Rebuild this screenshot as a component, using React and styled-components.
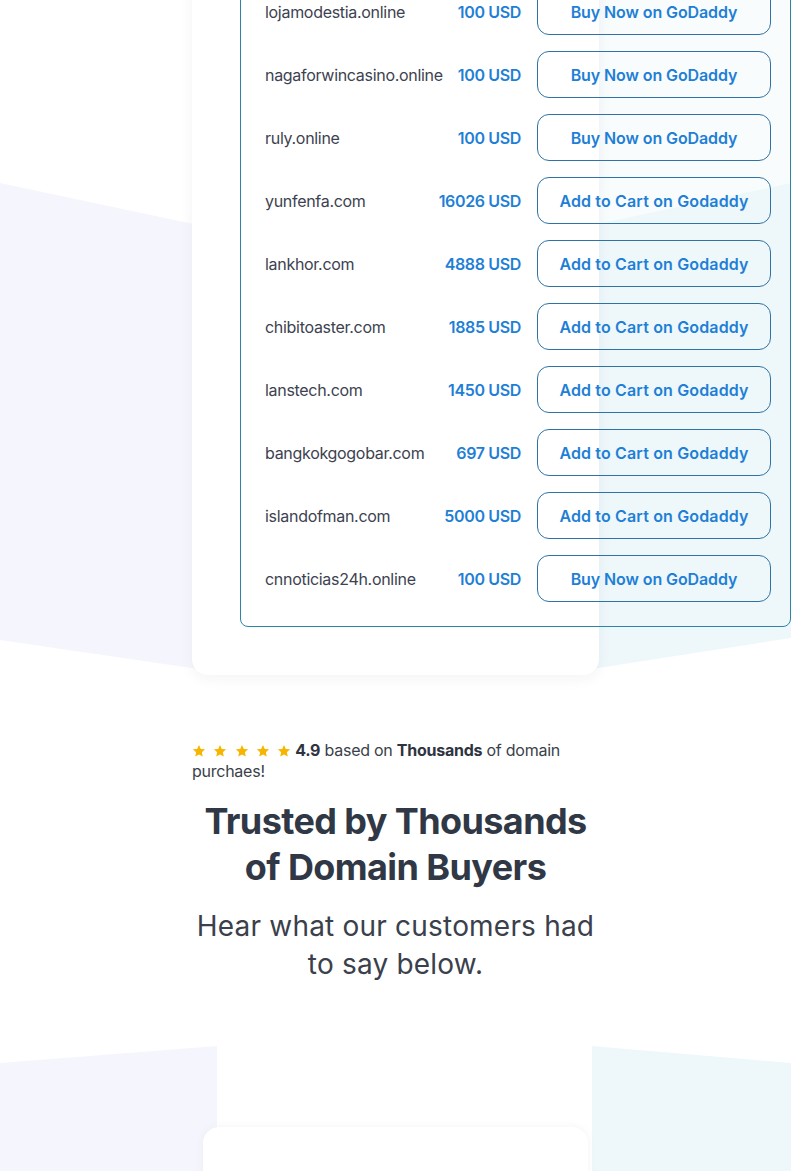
import React from 'react';
import styled, { createGlobalStyle } from 'styled-components';

const GlobalStyle = createGlobalStyle`
  html, body { margin: 0; padding: 0; background: #ffffff; overflow-x: hidden; }
  body { font-family: Inter, "Noto Sans", sans-serif; -webkit-font-smoothing: antialiased; }
  *, *::before, *::after { box-sizing: border-box; }
`;

const topBg = encodeURIComponent(
  `<svg xmlns="http://www.w3.org/2000/svg" width="791" height="800" viewBox="0 0 791 800">` +
    `<rect x="599" y="0" width="192" height="320" fill="#f9fcfd"/>` +
    `<polygon points="0,268 212,313 212,756 0,725" fill="#f5f6fd"/>` +
    `<polygon points="791,268 579,313 579,756 791,723" fill="#eef8fb"/>` +
    `</svg>`
);

const bottomBg = encodeURIComponent(
  `<svg xmlns="http://www.w3.org/2000/svg" width="791" height="400" viewBox="0 0 791 400">` +
    `<polygon points="0,17 217,0 217,400 0,400" fill="#f5f6fd"/>` +
    `<polygon points="592,0 791,17 791,400 592,400" fill="#eef8fb"/>` +
    `</svg>`
);

const Page = styled.div`
  width: 100%;
`;

const ListingSection = styled.section`
  margin-top: -85px;
  background: url("data:image/svg+xml,${topBg}") no-repeat left top / 791px 800px;
`;

const Card = styled.div`
  width: 407px;
  margin: 0 auto;
  padding: 48px;
  background: #ffffff;
  border-radius: 16px;
  box-shadow: 0 4px 14px rgba(30, 40, 80, 0.05);
`;

const DomainTable = styled.div`
  width: 551px;
  display: flex;
  flex-direction: column;
  gap: 16px;
  padding: 24px 19px 24px 24px;
  border: 1px solid #2a86a3;
  border-radius: 8px;
`;

const Row = styled.div`
  display: flex;
  align-items: center;
  gap: 16px;
`;

const DomainName = styled.span`
  flex: 1;
  min-width: 0;
  font-size: 16px;
  letter-spacing: -0.3px;
  color: #3c4250;
  white-space: nowrap;
`;

const Price = styled.span`
  font-size: 16px;
  font-weight: 600;
  letter-spacing: -0.35px;
  color: #1f7fd6;
  white-space: nowrap;
`;

const ActionButton = styled.button`
  flex: none;
  width: 234px;
  height: 47px;
  border: 1px solid #2e73a3;
  border-radius: 12px;
  background: transparent;
  color: #1f7fd6;
  font-family: inherit;
  font-size: 16px;
  font-weight: 600;
  letter-spacing: ${(p) => (p.$kind === 'cart' ? '0.15px' : '-0.1px')};
  cursor: pointer;
`;

const Intro = styled.div`
  width: 407px;
  margin: 0 auto;
  padding-top: 65px;
`;

const Rating = styled.p`
  margin: 0;
  font-size: 16px;
  line-height: 21px;
  letter-spacing: -0.25px;
  color: #3a3f4a;
  strong { color: #2e3440; font-weight: 700; }
`;

const Stars = styled.span`
  display: inline-flex;
  align-items: center;
  gap: 7.3px;
  height: 21px;
  margin-right: 4px;
  vertical-align: top;
`;

const StarIcon = styled.svg`
  width: 14px;
  height: 14px;
  display: block;
  fill: #f7b500;
`;

const Heading = styled.h2`
  margin: 16px 0 0;
  font-size: 36px;
  line-height: 46px;
  font-weight: 700;
  letter-spacing: -0.6px;
  text-align: center;
  color: #303846;
`;

const Subheading = styled.p`
  margin: 17px 0 0;
  font-size: 28px;
  line-height: 38px;
  font-weight: 400;
  letter-spacing: 0.2px;
  text-align: center;
  color: #3a404c;
`;

const Testimonials = styled.section`
  margin-top: 63px;
  height: 400px;
  padding-top: 81px;
  background: url("data:image/svg+xml,${bottomBg}") no-repeat left top / 791px 400px;
`;

const TestimonialCard = styled.div`
  width: 385px;
  height: 319px;
  margin: 0 auto;
  background: #ffffff;
  border-radius: 16px 16px 0 0;
  box-shadow: 0 0 10px rgba(30, 40, 80, 0.05);
`;

const domains = [
  ['lojamodestia.online', '100 USD', 'buy'],
  ['nagaforwincasino.online', '100 USD', 'buy'],
  ['ruly.online', '100 USD', 'buy'],
  ['yunfenfa.com', '16026 USD', 'cart'],
  ['lankhor.com', '4888 USD', 'cart'],
  ['chibitoaster.com', '1885 USD', 'cart'],
  ['lanstech.com', '1450 USD', 'cart'],
  ['bangkokgogobar.com', '697 USD', 'cart'],
  ['islandofman.com', '5000 USD', 'cart'],
  ['cnnoticias24h.online', '100 USD', 'buy'],
];

const Star = () => (
  <StarIcon viewBox="0 0 24 24" aria-hidden="true">
    <path d="M12 1.5l3.1 6.9 7.4.8-5.6 5 1.6 7.4L12 17.8l-6.5 3.8 1.6-7.4-5.6-5 7.4-.8z" />
  </StarIcon>
);

export default function App() {
  return (
    <Page>
      <GlobalStyle />
      <ListingSection>
        <Card>
          <DomainTable>
            {domains.map(([name, price, kind]) => (
              <Row key={name}>
                <DomainName>{name}</DomainName>
                <Price>{price}</Price>
                <ActionButton $kind={kind}>
                  {kind === 'buy' ? 'Buy Now on GoDaddy' : 'Add to Cart on Godaddy'}
                </ActionButton>
              </Row>
            ))}
          </DomainTable>
        </Card>
      </ListingSection>
      <Intro>
        <Rating>
          <Stars aria-label="5 stars">
            {[0, 1, 2, 3, 4].map((i) => (
              <Star key={i} />
            ))}
          </Stars>
          <strong>4.9</strong> based on <strong>Thousands</strong> of domain
          <br />
          purchaes!
        </Rating>
        <Heading>
          Trusted by Thousands
          <br />
          of Domain Buyers
        </Heading>
        <Subheading>
          Hear what our customers had
          <br />
          to say below.
        </Subheading>
      </Intro>
      <Testimonials>
        <TestimonialCard />
      </Testimonials>
    </Page>
  );
}
